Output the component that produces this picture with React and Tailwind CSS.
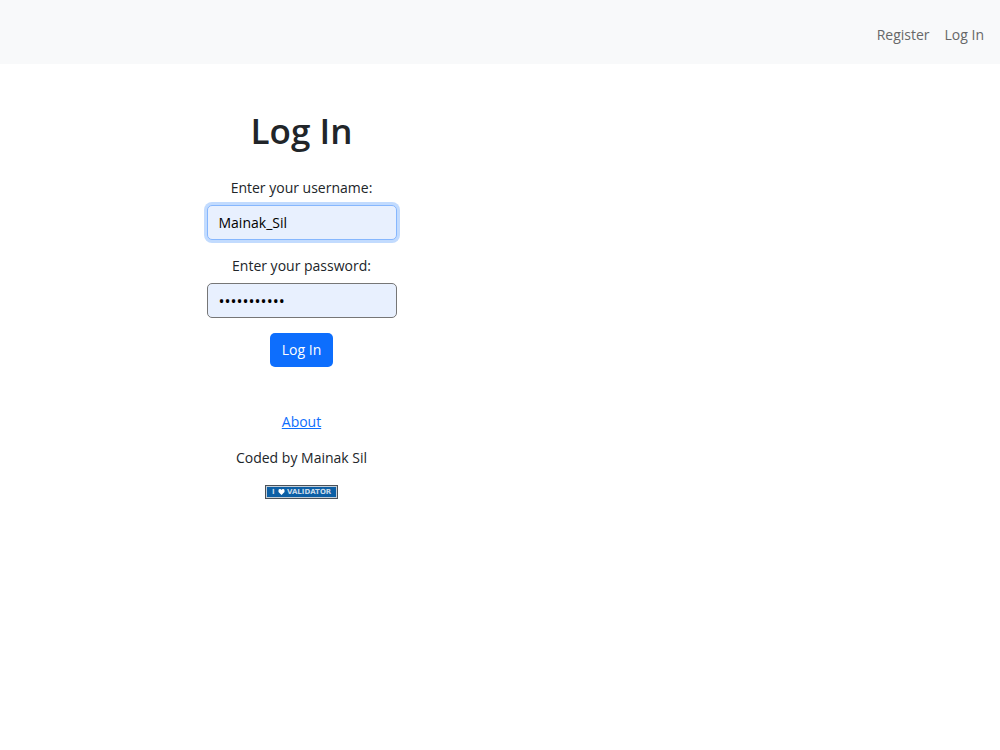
function ValidatorBadge() {
  return (
    <svg className="block h-[14px] w-[73px]" viewBox="0 0 73 14" role="img" aria-label="I love validator">
      <rect width="73" height="14" fill="#4b5158" />
      <rect x="1" y="1" width="71" height="12" fill="#c3ced8" />
      <rect x="2" y="2" width="69" height="10" fill="#0c5fa5" />
      <path d="M16.5 10 L13.5 7 V5.2 Q13.5 4 15 4 Q16.1 4 16.5 5 Q16.9 4 18 4 Q19.5 4 19.5 5.2 V7 Z" fill="#fff" />
      <text x="7" y="9" fill="#c6d9ea" fontFamily="DejaVu Sans, sans-serif" fontSize="7" fontWeight="700">I</text>
      <text x="22" y="9" fill="#c6d9ea" fontFamily="DejaVu Sans, sans-serif" fontSize="7" fontWeight="700">VALIDATOR</text>
    </svg>
  );
}

const fieldClass =
  "block h-[35px] w-[190px] rounded-[5px] border bg-[#e8f0fe] px-[11px] leading-[22px] text-black outline-none";

export default function App() {
  return (
    <div className="min-h-screen bg-white font-['Open_Sans','Noto_Sans',sans-serif] text-[14px] leading-[22px] text-[#212529]">
      <nav className="flex h-16 items-center justify-end gap-[15px] bg-[#f8f9fa] px-4 pt-[6px] text-[#666768]">
        <a href="#register">Register</a>
        <a href="#login">Log In</a>
      </nav>
      <div className="flex w-[60.3%] flex-col items-center pt-[45px]">
        <h1 className="text-[35px] leading-[44px] font-semibold">Log In</h1>
        <form className="flex flex-col items-center pt-6" onSubmit={(event) => event.preventDefault()}>
          <label htmlFor="username" className="mb-[6px]">Enter your username:</label>
          <input
            id="username"
            type="text"
            defaultValue="Mainak_Sil"
            className={`${fieldClass} mb-[15px] border-[#86b7fe] text-[14px] ring-3 ring-[#c2dbfe]`}
          />
          <label htmlFor="password" className="mb-[6px]">Enter your password:</label>
          <input
            id="password"
            type="password"
            defaultValue="validator12"
            className={`${fieldClass} mb-[15px] border-[#767676] text-[16px]`}
          />
          <button type="submit" className="h-[34px] rounded-[5px] bg-[#0d6efd] px-3 text-white">
            Log In
          </button>
        </form>
        <footer className="flex flex-col items-center gap-[14px] pt-11">
          <a href="#about" className="text-[#0d6efd] underline">About</a>
          <p>Coded by Mainak Sil</p>
          <a href="#validator" className="pt-[2px]">
            <ValidatorBadge />
          </a>
        </footer>
      </div>
    </div>
  );
}
